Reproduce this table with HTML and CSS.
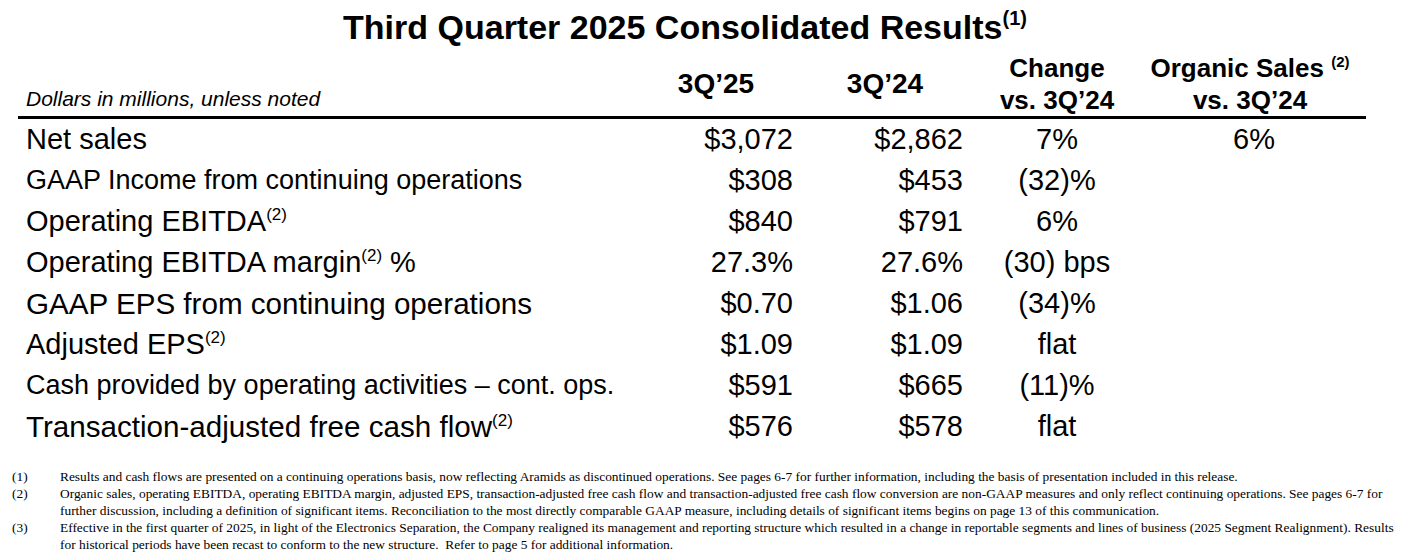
FILE: index.html
```html
<!DOCTYPE html>
<html lang="en">
<head>
<meta charset="utf-8">
<title>Third Quarter 2025 Consolidated Results</title>
<link rel="stylesheet" href="styles.css">
</head>
<body>
<div class="slide">
  <h1 class="title">Third Quarter 2025 Consolidated Results<sup>(1)</sup></h1>
  <div class="table">
    <div class="row head">
      <div class="label note">Dollars in millions, unless noted</div>
      <div class="h h1">3Q’25</div>
      <div class="h h2">3Q’24</div>
      <div class="h h3">Change<br>vs. 3Q’24</div>
      <div class="h h4">Organic Sales <sup>(2)</sup><br>vs. 3Q’24</div>
    </div>
    <div class="row">
      <div class="label">Net sales</div>
      <div class="val v1">$3,072</div>
      <div class="val v2">$2,862</div>
      <div class="chg">7%</div>
      <div class="org">6%</div>
    </div>
    <div class="row">
      <div class="label small">GAAP Income from continuing operations</div>
      <div class="val v1">$308</div>
      <div class="val v2">$453</div>
      <div class="chg">(32)%</div>
      <div class="org"></div>
    </div>
    <div class="row">
      <div class="label">Operating EBITDA<sup>(2)</sup></div>
      <div class="val v1">$840</div>
      <div class="val v2">$791</div>
      <div class="chg">6%</div>
      <div class="org"></div>
    </div>
    <div class="row">
      <div class="label">Operating EBITDA margin<sup>(2)</sup> %</div>
      <div class="val v1">27.3%</div>
      <div class="val v2">27.6%</div>
      <div class="chg">(30) bps</div>
      <div class="org"></div>
    </div>
    <div class="row">
      <div class="label wide">GAAP EPS from continuing operations</div>
      <div class="val v1">$0.70</div>
      <div class="val v2">$1.06</div>
      <div class="chg">(34)%</div>
      <div class="org"></div>
    </div>
    <div class="row">
      <div class="label">Adjusted EPS<sup>(2)</sup></div>
      <div class="val v1">$1.09</div>
      <div class="val v2">$1.09</div>
      <div class="chg">flat</div>
      <div class="org"></div>
    </div>
    <div class="row">
      <div class="label small">Cash provided by operating activities – cont. ops.</div>
      <div class="val v1">$591</div>
      <div class="val v2">$665</div>
      <div class="chg">(11)%</div>
      <div class="org"></div>
    </div>
    <div class="row">
      <div class="label wide">Transaction-adjusted free cash flow<sup>(2)</sup></div>
      <div class="val v1">$576</div>
      <div class="val v2">$578</div>
      <div class="chg">flat</div>
      <div class="org"></div>
    </div>
  </div>
  <div class="notes">
    <div class="num">(1)</div>
    <div class="txt"><span class="ln">Results and cash flows are presented on a continuing operations basis, now reflecting Aramids as discontinued operations. See pages 6-7 for further information, including the basis of presentation included in this release.</span></div>
    <div class="num">(2)</div>
    <div class="txt"><span class="ln">Organic sales, operating EBITDA, operating EBITDA margin, adjusted EPS, transaction-adjusted free cash flow and transaction-adjusted free cash flow conversion are non-GAAP measures and only reflect continuing operations. See pages 6-7 for</span><span class="ln">further discussion, including a definition of significant items. Reconciliation to the most directly comparable GAAP measure, including details of significant items begins on page 13 of this communication.</span></div>
    <div class="num">(3)</div>
    <div class="txt"><span class="ln">Effective in the first quarter of 2025, in light of the Electronics Separation, the Company realigned its management and reporting structure which resulted in a change in reportable segments and lines of business (2025 Segment Realignment). Results</span><span class="ln">for historical periods have been recast to conform to the new structure.&nbsp; Refer to page 5 for additional information.</span></div>
  </div>
</div>
</body>
</html>
```

FILE: styles.css
```css
html, body {
  margin: 0;
  padding: 0;
  background: #ffffff;
}

body {
  font-family: "Liberation Sans", Arial, sans-serif;
  color: #000000;
}

.slide {
  width: 1418px;
  height: 558px;
  overflow: hidden;
}

.title {
  margin: 0;
  height: 52px;
  line-height: 54px;
  font-size: 34px;
  font-weight: bold;
  text-align: center;
  padding-right: 48px;
}

.title sup {
  font-size: 20px;
  line-height: 0;
  vertical-align: 14px;
}

.table {
  margin-left: 18px;
  width: 1348px;
}

.row {
  display: grid;
  grid-template-columns: 620px 170px 170px 164px 224px;
  height: 41px;
  align-items: center;
  font-size: 29px;
  line-height: 41px;
  white-space: nowrap;
}

.row sup {
  font-size: 17px;
  line-height: 0;
  vertical-align: 11px;
}

.head {
  height: 64px;
  border-bottom: 3px solid #000000;
}

.label {
  padding-left: 8px;
}

.label.small {
  font-size: 27px;
}

.label.wide {
  font-size: 29.6px;
}

.note {
  align-self: end;
  font-style: italic;
  font-size: 21px;
  line-height: 22px;
  padding-bottom: 6px;
}

.h {
  font-weight: bold;
  font-size: 26px;
  line-height: 32px;
  text-align: center;
}

.h sup {
  font-size: 15px;
  font-weight: bold;
  vertical-align: 10px;
}

.h1 {
  padding-right: 14px;
  font-size: 28px;
}

.h2 {
  padding-right: 16px;
  font-size: 28px;
}

.h3 {
  padding-right: 6px;
}

.h4 {
  padding-right: 8px;
}

.val {
  text-align: right;
}

.v1,
.v2 {
  padding-right: 15px;
}

.chg {
  text-align: center;
  padding-right: 6px;
}

.org {
  text-align: center;
}

.notes {
  margin-top: 21px;
  margin-left: 12px;
  display: grid;
  grid-template-columns: 48px 1350px;
  font-family: "Liberation Serif", "Times New Roman", serif;
  font-size: 13.4px;
  line-height: 17px;
  white-space: nowrap;
}

.ln {
  display: block;
}
```
